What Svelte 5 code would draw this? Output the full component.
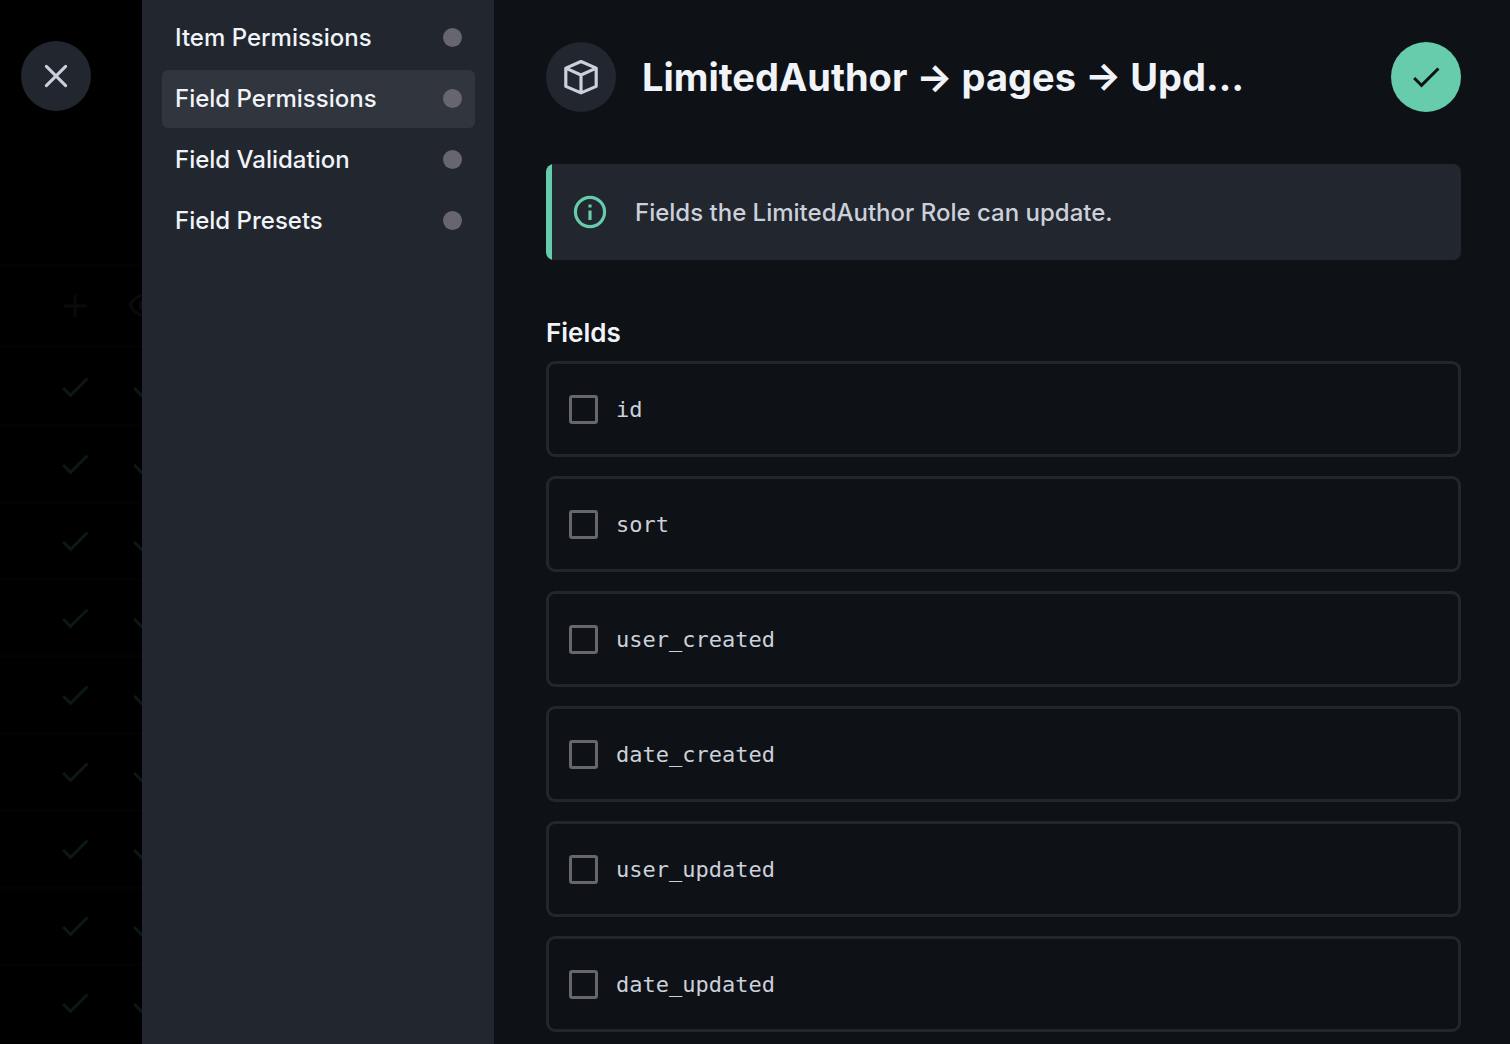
<script>
  const sections = [
    'Item Permissions',
    'Field Permissions',
    'Field Validation',
    'Field Presets',
  ];
  let active = $state('Field Permissions');

  let fields = $state(
    ['id', 'sort', 'user_created', 'date_created', 'user_updated', 'date_updated'].map((name) => ({
      name,
      checked: false,
    })),
  );

  const collections = Array.from({ length: 9 }, (_, i) => i);
</script>

{#snippet check(size)}
  <svg class="icon" width={size} height={size} viewBox="0 0 24 24" aria-hidden="true">
    <path d="M9 16.17 4.83 12l-1.42 1.41L9 19 21 7l-1.41-1.41z" />
  </svg>
{/snippet}

<div class="page">
  <div class="backdrop">
    <div class="matrix" aria-hidden="true">
      <div class="row head">
        <span class="cell">
          <svg class="icon" width="32" height="32" viewBox="0 0 24 24"><path d="M20.5 13.1h-7.4v7.4h-2.2v-7.4H3.5v-2.2h7.4V3.5h2.2v7.4h7.4z" /></svg>
        </span>
        <span class="cell">
          <svg class="icon" width="38" height="38" viewBox="0 0 24 24"><path d="M12 6a9.77 9.77 0 0 1 8.82 5.5 9.76 9.76 0 0 1-17.64 0A9.77 9.77 0 0 1 12 6m0-2C7 4 2.73 7.11 1 11.5 2.73 15.89 7 19 12 19s9.27-3.11 11-7.5C21.27 7.11 17 4 12 4m0 5a2.5 2.5 0 0 1 0 5 2.5 2.5 0 0 1 0-5m0-2a4.5 4.5 0 0 0 0 9 4.5 4.5 0 0 0 0-9" /></svg>
        </span>
      </div>
      {#each collections as id (id)}
        <div class="row">
          <span class="cell">{@render check(36)}</span>
          <span class="cell">{@render check(36)}</span>
        </div>
      {/each}
    </div>
    <button class="round close" type="button" aria-label="Close">
      <svg width="38" height="38" viewBox="0 0 24 24" aria-hidden="true">
        <path d="M5.9 5.9l12.2 12.2M18.1 5.9L5.9 18.1" fill="none" stroke="currentColor" stroke-width="1.9" stroke-linecap="round" />
      </svg>
    </button>
  </div>

  <nav class="sidebar" aria-label="Permission sections">
    {#each sections as label (label)}
      <button
        class="tab"
        class:active={active === label}
        type="button"
        aria-current={active === label ? 'page' : undefined}
        onclick={() => (active = label)}
      >
        <span>{label}</span>
        <span class="dot"></span>
      </button>
    {/each}
  </nav>

  <main class="content">
    <header>
      <span class="round emblem">
        <svg width="38" height="38" viewBox="0 0 24 24" aria-hidden="true">
          <path d="M12 2.2 21.6 6.4V17.9L12 22 2.4 17.9V6.4ZM2.4 6.4 12 10.7l9.6-4.3M12 10.7v11.1" fill="none" stroke="currentColor" stroke-width="2" stroke-linejoin="round" />
        </svg>
      </span>
      <h1>LimitedAuthor → pages → Upd…</h1>
      <button class="round save" type="button" aria-label="Save">{@render check(36)}</button>
    </header>

    <div class="notice" role="note">
      <svg width="38" height="38" viewBox="0 0 24 24" aria-hidden="true">
        <circle cx="12" cy="12" r="9.2" fill="none" stroke="currentColor" stroke-width="2" />
        <path d="M11 11h2v6h-2zM11 7.2h2v1.9h-2z" fill="currentColor" />
      </svg>
      <p>Fields the LimitedAuthor Role can update.</p>
    </div>

    <fieldset>
      <legend>Fields</legend>
      <div class="options">
        {#each fields as field (field.name)}
          <label class="option">
            <input type="checkbox" bind:checked={field.checked} />
            <span>{field.name}</span>
          </label>
        {/each}
      </div>
    </fieldset>
  </main>
</div>

<style>
  :global(body) {
    background: #0e1116;
  }

  .page {
    display: grid;
    grid-template-columns: 142px 352px minmax(0, 1fr);
    height: 100vh;
    overflow: hidden;
    background: #0e1116;
    color: #f0f4f9;
    font-family: Inter, 'Liberation Sans', sans-serif;
    font-size: 24px;
    font-weight: 500;
  }

  button {
    border: 0;
    padding: 0;
    color: inherit;
    font: inherit;
    cursor: pointer;
  }

  .icon {
    display: block;
    flex: none;
    fill: currentColor;
  }

  .round {
    display: flex;
    flex: none;
    align-items: center;
    justify-content: center;
    width: 70px;
    height: 70px;
    border-radius: 50%;
    background: #22262e;
    color: #cbd0da;
  }

  .backdrop {
    position: relative;
    overflow: hidden;
    background: #000;
  }

  .close {
    position: absolute;
    top: 41px;
    left: 21px;
  }

  .matrix {
    padding-top: 264px;
    color: #0b1814;
  }

  .row {
    display: flex;
    gap: 37px;
    box-sizing: border-box;
    height: 77px;
    padding-left: 58px;
    border-bottom: 3px solid #030303;
  }

  .row.head {
    height: 84px;
    margin-bottom: 2px;
    border-top: 3px solid #030303;
    color: #0a0a0b;
  }

  .cell {
    display: flex;
    flex: none;
    align-items: center;
    justify-content: center;
    width: 34px;
  }

  .sidebar {
    display: flex;
    flex-direction: column;
    gap: 3px;
    padding: 9px 19px 20px 20px;
    background: #22262e;
  }

  .tab {
    display: flex;
    align-items: center;
    justify-content: space-between;
    height: 58px;
    padding: 0 13px 2px;
    border-radius: 6px;
    background: transparent;
    text-align: left;
  }

  .tab.active {
    background: #31353d;
  }

  .dot {
    width: 19px;
    height: 19px;
    border-radius: 50%;
    background: #666570;
  }

  .content {
    overflow: hidden;
    padding: 42px 49px 0 52px;
  }

  header {
    display: flex;
    align-items: center;
    gap: 26px;
  }

  h1 {
    flex: 1;
    min-width: 0;
    margin: 0;
    overflow: hidden;
    font-size: 38px;
    font-optical-sizing: none;
    font-weight: 700;
    line-height: 48px;
    text-overflow: ellipsis;
    white-space: nowrap;
  }

  .save {
    background: #66ccab;
    color: #0e1116;
  }

  .notice {
    display: flex;
    align-items: center;
    gap: 26px;
    min-height: 96px;
    margin-top: 52px;
    padding: 0 20px;
    border-radius: 8px;
    background: linear-gradient(to right, #66ccab 6px, #22262e 6px);
    color: #66ccab;
  }

  .notice svg {
    flex: none;
    margin-left: 5px;
  }

  .notice p {
    margin: 0;
    color: #cbd0da;
  }

  fieldset {
    min-width: 0;
    margin: 57px 0 0;
    padding: 0;
    border: 0;
  }

  legend {
    padding: 0;
    font-size: 26px;
    font-weight: 600;
    line-height: 32px;
  }

  .options {
    display: grid;
    gap: 19px;
    padding-top: 12px;
  }

  .option {
    display: flex;
    align-items: center;
    gap: 18px;
    box-sizing: border-box;
    height: 96px;
    padding: 0 20px;
    border: 3px solid #22262d;
    border-radius: 9px;
    color: #cbd0da;
    font-family: 'DejaVu Sans Mono', 'Liberation Mono', monospace;
    font-size: 22px;
    font-weight: 400;
    cursor: pointer;
  }

  input {
    appearance: none;
    box-sizing: border-box;
    width: 29px;
    height: 29px;
    margin: 0;
    border: 3px solid #666570;
    border-radius: 3px;
  }

  input:checked {
    border-color: #66ccab;
    background: #66ccab;
  }
</style>
